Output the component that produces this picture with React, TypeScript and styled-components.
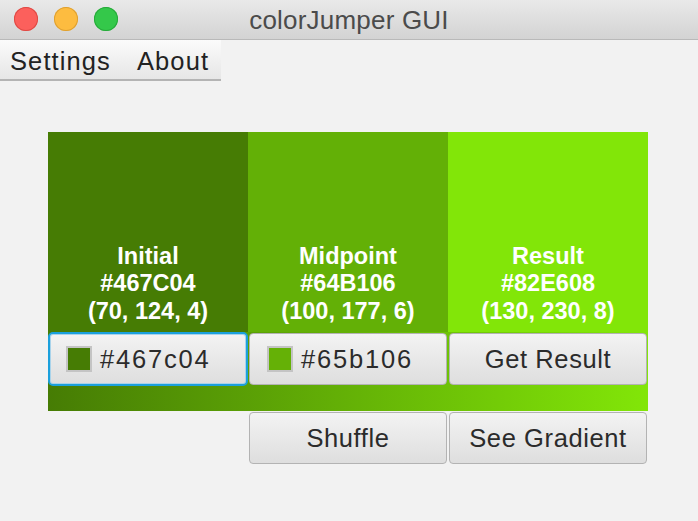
import styled, { createGlobalStyle } from 'styled-components';

const Global = createGlobalStyle`
  html, body {
    margin: 0;
    padding: 0;
    background: #f2f2f2;
    font-family: "Liberation Sans", Arial, sans-serif;
  }
`;

const stops = [
  { name: 'Initial', hex: '#467C04', rgb: '(70, 124, 4)', color: '#467c04' },
  { name: 'Midpoint', hex: '#64B106', rgb: '(100, 177, 6)', color: '#63b006' },
  { name: 'Result', hex: '#82E608', rgb: '(130, 230, 8)', color: '#82e608' },
];

const Window = styled.div`
  width: 698px;
  height: 521px;
  background: #f2f2f2;
  overflow: hidden;
`;

const TitleBar = styled.div`
  position: relative;
  height: 40px;
  display: flex;
  align-items: center;
  justify-content: center;
  background: linear-gradient(#e9e9e9, #d3d3d3);
  border-bottom: 1px solid #b9b9b9;
  box-sizing: border-box;
`;

const Lights = styled.div`
  position: absolute;
  left: 14px;
  top: 7px;
  display: flex;
  gap: 16px;
`;

const Light = styled.span<{ $c: string; $b: string }>`
  width: 24px;
  height: 24px;
  border-radius: 50%;
  background: ${(p) => p.$c};
  box-shadow: inset 0 0 0 1px ${(p) => p.$b};
`;

const Title = styled.div`
  font-size: 26px;
  color: #4b4b4b;
  padding-top: 1px;
  letter-spacing: 0.2px;
`;

const MenuBar = styled.div`
  width: 221px;
  height: 41px;
  display: flex;
  align-items: center;
  gap: 26px;
  padding: 3px 0 0 10px;
  box-sizing: border-box;
  background: linear-gradient(#fbfbfb, #e6e6e6);
  border-bottom: 2px solid #b4b4b4;
`;

const MenuItem = styled.span`
  font-size: 25.5px;
  color: #222;
  letter-spacing: 1.1px;
`;

const Content = styled.div`
  padding: 51px 0 0 48px;
`;

const Grid = styled.div`
  display: grid;
  grid-template-columns: repeat(3, 200px);
  width: 600px;
`;

const Panel = styled.div<{ $bg: string }>`
  height: 200px;
  background: ${(p) => p.$bg};
  display: flex;
  flex-direction: column;
  justify-content: flex-end;
  align-items: center;
  padding-bottom: 7px;
  box-sizing: border-box;
  color: #fff;
  font-weight: bold;
  font-size: 23.5px;
  line-height: 27.5px;
`;

const Strip = styled.div`
  grid-column: 1 / 4;
  height: 79px;
  display: grid;
  grid-template-columns: repeat(3, 200px);
  align-items: start;
  background: linear-gradient(to right, #467c04, #82e608);
`;

const Button = styled.button<{ $focus?: boolean }>`
  width: 198px;
  height: 52px;
  margin: 1px;
  box-sizing: border-box;
  border: 1px solid #b3b3b3;
  border-radius: 4px;
  background: linear-gradient(#f3f3f3, #dedede);
  font-family: "Liberation Sans", Arial, sans-serif;
  font-size: 25.5px;
  letter-spacing: 0.6px;
  color: #2b2b2b;
  display: flex;
  align-items: center;
  justify-content: center;
  gap: 8px;
  padding: 0;
  ${(p) =>
    p.$focus &&
    `
    margin: 0;
    width: 200px;
    height: 54px;
    border: 2px solid #1ba0dc;
    border-radius: 5px;
    box-shadow: inset 0 0 0 1px #a9d3ea;
  `}
`;

const PickerButton = styled(Button)`
  justify-content: flex-start;
  padding-left: 17px;
  letter-spacing: 1.8px;
`;

const Swatch = styled.span<{ $c: string }>`
  width: 22px;
  height: 22px;
  background: ${(p) => p.$c};
  border: 2px solid #c4c4c4;
`;

const Spacer = styled.div``;

export default function App() {
  return (
    <Window>
      <Global />
      <TitleBar>
        <Lights>
          <Light $c="#fc605c" $b="#de4a45" />
          <Light $c="#fdbc40" $b="#dea032" />
          <Light $c="#34c84a" $b="#27a93a" />
        </Lights>
        <Title>colorJumper GUI</Title>
      </TitleBar>
      <MenuBar>
        <MenuItem>Settings</MenuItem>
        <MenuItem>About</MenuItem>
      </MenuBar>
      <Content>
        <Grid>
          {stops.map((s) => (
            <Panel key={s.name} $bg={s.color}>
              <div>{s.name}</div>
              <div>{s.hex}</div>
              <div>{s.rgb}</div>
            </Panel>
          ))}
          <Strip>
            <PickerButton $focus style={{ paddingLeft: 16 }}>
              <Swatch $c="#467c04" />
              #467c04
            </PickerButton>
            <PickerButton>
              <Swatch $c="#65b106" />
              #65b106
            </PickerButton>
            <Button>Get Result</Button>
          </Strip>
          <Spacer />
          <Button>Shuffle</Button>
          <Button>See Gradient</Button>
        </Grid>
      </Content>
    </Window>
  );
}
